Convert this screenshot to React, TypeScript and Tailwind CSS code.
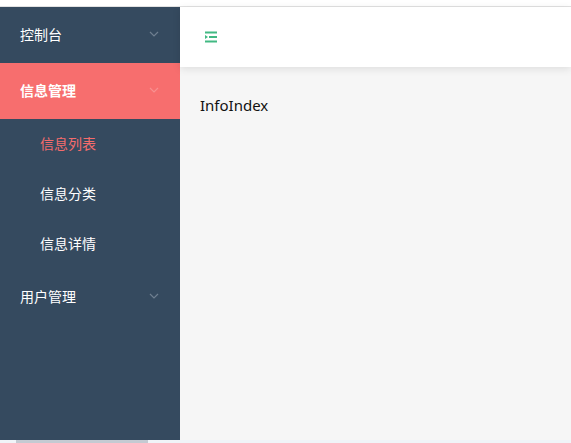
import React from 'react';

const Chevron = ({ color }: { color: string }) => (
  <svg width="10" height="6" viewBox="0 0 10 6" fill="none">
    <path d="M1 1l4 4 4-4" stroke={color} strokeWidth="1.2" />
  </svg>
);

const FoldIcon = () => (
  <svg width="14" height="12" viewBox="0 0 14 12" fill="#42b983">
    <rect x="1" y="0.5" width="12" height="2" />
    <rect x="5" y="5" width="8" height="2" />
    <path d="M1 4l3 2-3 2z" />
    <rect x="1" y="9.5" width="12" height="2" />
  </svg>
);

const App = () => {
  const font = { fontFamily: '"Noto Sans", "Noto Sans CJK SC", sans-serif' };

  return (
    <div className="w-[571px] h-[443px] flex flex-col bg-[#f6f6f6] overflow-hidden" style={font}>
      {/* top strip */}
      <div className="h-[7px] bg-white border-b border-[#e2e2e2] shrink-0" />

      <div className="flex flex-1 min-h-0">
        {/* Sidebar */}
        <aside className="w-[180px] bg-[#354a5f] text-[14px] text-white">
          <div className="h-14 flex items-center justify-between pl-5 pr-[21px] pb-[2px]">
            <span>控制台</span>
            <Chevron color="#6f7f90" />
          </div>
          <div className="h-14 flex items-center justify-between pl-5 pr-[21px] pb-[2px] bg-[#f76e6e] font-semibold">
            <span>信息管理</span>
            <Chevron color="#f89090" />
          </div>
          <div className="h-[50px] flex items-center pl-10 pb-[2px] text-[#f56c6c]">信息列表</div>
          <div className="h-[50px] flex items-center pl-10 pb-[2px]">信息分类</div>
          <div className="h-[50px] flex items-center pl-10 pb-[2px]">信息详情</div>
          <div className="h-14 flex items-center justify-between pl-5 pr-[21px] pb-[2px]">
            <span>用户管理</span>
            <Chevron color="#6f7f90" />
          </div>
        </aside>

        {/* Main */}
        <main className="flex-1 flex flex-col">
          <header className="h-[60px] bg-white flex items-center pl-6 shadow-[0_2px_8px_rgba(0,0,0,0.1)]">
            <FoldIcon />
          </header>
          <div className="px-5 pt-[27px] text-[15px] text-[#111]">InfoIndex</div>
        </main>
      </div>

      {/* horizontal scrollbar */}
      <div className="h-[3px] shrink-0 bg-[#f0f4f8] relative">
        <div className="absolute left-4 top-0 w-[132px] h-[3px] bg-[#c4cad2]" />
      </div>
    </div>
  );
};

export default App;
